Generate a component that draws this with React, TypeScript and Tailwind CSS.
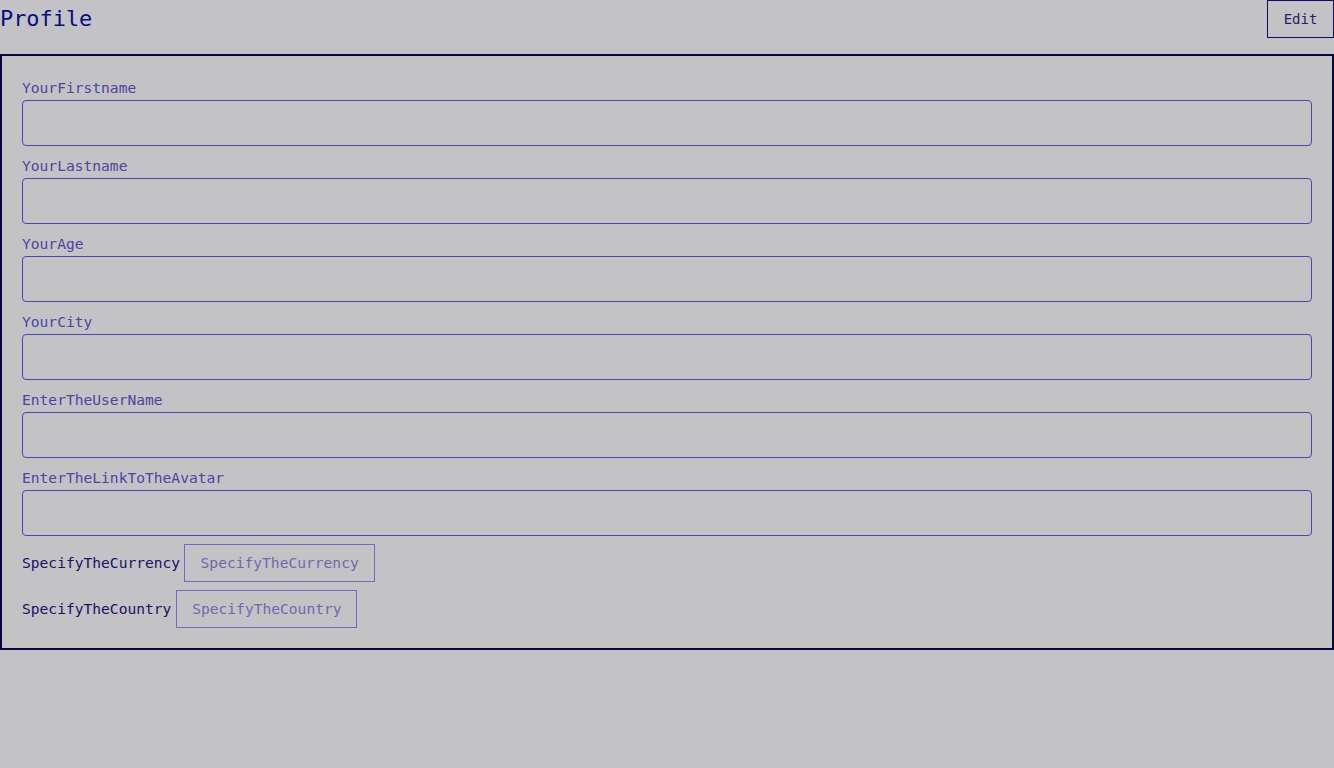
import React from "react";

const mono = { fontFamily: '"DejaVu Sans Mono", "Liberation Mono", monospace' };

const fields = [
  "YourFirstname",
  "YourLastname",
  "YourAge",
  "YourCity",
  "EnterTheUserName",
  "EnterTheLinkToTheAvatar",
];

export default function App() {
  return (
    <div className="min-h-[768px] w-full bg-[#c3c2c5]" style={mono}>
      <div className="flex h-[38px] items-center justify-between">
        <h1 className="text-[21.9px] leading-[38px] text-[#0b0a86]">Profile</h1>
        <button className="flex h-[38px] w-[67px] items-center justify-center border border-[#0f0c6e] text-[14px] text-[#2a2070]">
          Edit
        </button>
      </div>
      <div className="mt-[16px] border-2 border-[#0c0640] px-[20px] pb-[20px] pt-[22px]">
        {fields.map((f) => (
          <div key={f} className="mb-[10px]">
            <label className="block h-[20px] text-[14.6px] leading-[20px] text-[#4d44a3]">{f}</label>
            <input className="mt-[2px] block h-[46px] w-full rounded-[4px] border border-[#4d45b4] bg-transparent outline-none" />
          </div>
        ))}
        <div className="-mt-[2px] flex h-[38px] items-center">
          <span className="text-[14.6px] text-[#1c0f66]">SpecifyTheCurrency</span>
          <div className="ml-[4px] flex h-[38px] w-[191px] items-center justify-center border border-[#7468c2] text-[14.6px] text-[#6f68b0]">
            SpecifyTheCurrency
          </div>
        </div>
        <div className="mt-[8px] flex h-[38px] items-center">
          <span className="text-[14.6px] text-[#1c0f66]">SpecifyTheCountry</span>
          <div className="ml-[5px] flex h-[38px] w-[181px] items-center justify-center border border-[#7468c2] text-[14.6px] text-[#6f68b0]">
            SpecifyTheCountry
          </div>
        </div>
      </div>
    </div>
  );
}
